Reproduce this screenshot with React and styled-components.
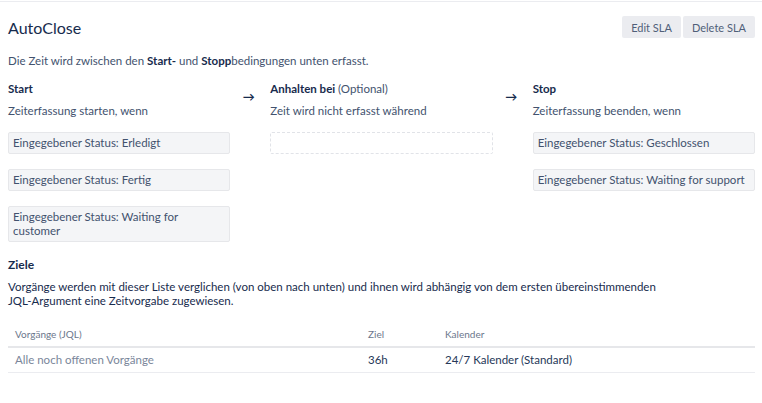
import React from "react";
import styled, { createGlobalStyle } from "styled-components";

const GlobalStyle = createGlobalStyle`
  html, body {
    margin: 0;
    padding: 0;
    background: #fff;
  }
  body {
    font-family: Lato, "Noto Sans", "Liberation Sans", sans-serif;
    color: #172b4d;
    font-size: 11.5px;
  }
`;

const Page = styled.div`
  border-top: 1px solid #ebecf0;
  margin-top: 1px;
  padding: 0 7px 0 8px;
`;

const Header = styled.div`
  display: flex;
  align-items: center;
  justify-content: space-between;
  padding-top: 14px;
`;

const Title = styled.h1`
  margin: 0;
  font-size: 16px;
  font-weight: 400;
  color: #172b4d;
`;

const ButtonGroup = styled.div`
  display: flex;
  gap: 2px;
`;

const Button = styled.button`
  height: 22px;
  padding: 0 9px;
  border: none;
  border-radius: 2px;
  background: #ebecf0;
  color: #505f79;
  font-family: inherit;
  font-size: 11px;
`;

const Intro = styled.p`
  margin: 16px 0 0;
  font-size: 11.5px;
  line-height: 14px;
  color: #42526e;

  b {
    color: #172b4d;
  }
`;

const Flow = styled.div`
  display: grid;
  grid-template-columns: 1fr 40px 1fr 40px 1fr;
  margin-top: 14px;
`;

const Column = styled.div`
  display: flex;
  flex-direction: column;
`;

const Arrow = styled.div`
  text-align: center;
  font-size: 12px;
  font-weight: 700;
  color: #172b4d;
  line-height: 12px;
  padding-top: 9px;
  padding-right: 3px;
`;

const ColTitle = styled.div`
  font-size: 11.5px;
  line-height: 14px;
  font-weight: 700;
  color: #172b4d;

  span {
    font-weight: 400;
    color: #42526e;
  }
`;

const ColText = styled.div`
  margin-top: 8px;
  font-size: 11.5px;
  line-height: 14px;
  color: #42526e;
`;

const Conditions = styled.div`
  display: flex;
  flex-direction: column;
  gap: 15px;
  margin-top: 14px;
`;

const Condition = styled.div`
  box-sizing: border-box;
  min-height: 22px;
  padding: 3px 4px 3px;
  border: 1px solid #e6e7ea;
  border-radius: 2px;
  background: #f4f5f7;
  font-size: 11.5px;
  line-height: 14px;
  color: #42526e;
`;

const EmptySlot = styled.div`
  box-sizing: border-box;
  height: 22px;
  border: 1px dashed #e1e3e8;
  border-radius: 2px;
`;

const SectionTitle = styled.h2`
  margin: 15px 0 0;
  font-size: 12px;
  line-height: 16px;
  font-weight: 700;
  color: #172b4d;
`;

const SectionText = styled.p`
  margin: 7px 0 0;
  max-width: 670px;
  font-size: 11.5px;
  line-height: 14px;
  color: #172b4d;
`;

const Table = styled.table`
  width: 100%;
  margin-top: 20px;
  border-collapse: collapse;
`;

const Th = styled.th`
  width: ${(p) => p.$w || "auto"};
  padding: 0 7px 6px;
  border-bottom: 2px solid #e6e7ea;
  text-align: left;
  font-size: 10px;
  font-weight: 400;
  color: #6b778c;
`;

const Td = styled.td`
  padding: 5px 7px 5px;
  border-bottom: 1px solid #ebecf0;
  font-size: 11.5px;
  line-height: 14px;
  color: ${(p) => (p.$muted ? "#7a869a" : "#253858")};
`;

const conditions = {
  start: [
    "Eingegebener Status: Erledigt",
    "Eingegebener Status: Fertig",
    "Eingegebener Status: Waiting for customer",
  ],
  stop: ["Eingegebener Status: Geschlossen", "Eingegebener Status: Waiting for support"],
};

export default function App() {
  return (
    <>
      <GlobalStyle />
      <Page>
        <Header>
          <Title>AutoClose</Title>
          <ButtonGroup>
            <Button>Edit SLA</Button>
            <Button>Delete SLA</Button>
          </ButtonGroup>
        </Header>

        <Intro>
          Die Zeit wird zwischen den <b>Start-</b> und <b>Stopp</b>bedingungen unten erfasst.
        </Intro>

        <Flow>
          <Column>
            <ColTitle>Start</ColTitle>
            <ColText>Zeiterfassung starten, wenn</ColText>
            <Conditions>
              {conditions.start.map((c) => (
                <Condition key={c}>{c}</Condition>
              ))}
            </Conditions>
          </Column>
          <Arrow>→</Arrow>
          <Column>
            <ColTitle>
              Anhalten bei <span>(Optional)</span>
            </ColTitle>
            <ColText>Zeit wird nicht erfasst während</ColText>
            <Conditions>
              <EmptySlot />
            </Conditions>
          </Column>
          <Arrow>→</Arrow>
          <Column>
            <ColTitle>Stop</ColTitle>
            <ColText>Zeiterfassung beenden, wenn</ColText>
            <Conditions>
              {conditions.stop.map((c) => (
                <Condition key={c}>{c}</Condition>
              ))}
            </Conditions>
          </Column>
        </Flow>

        <SectionTitle>Ziele</SectionTitle>
        <SectionText>
          Vorgänge werden mit dieser Liste verglichen (von oben nach unten) und ihnen wird abhängig von
          dem ersten übereinstimmenden JQL-Argument eine Zeitvorgabe zugewiesen.
        </SectionText>

        <Table>
          <thead>
            <tr>
              <Th $w="339px">Vorgänge (JQL)</Th>
              <Th $w="63px">Ziel</Th>
              <Th>Kalender</Th>
            </tr>
          </thead>
          <tbody>
            <tr>
              <Td $muted>Alle noch offenen Vorgänge</Td>
              <Td>36h</Td>
              <Td>24/7 Kalender (Standard)</Td>
            </tr>
          </tbody>
        </Table>
      </Page>
    </>
  );
}
